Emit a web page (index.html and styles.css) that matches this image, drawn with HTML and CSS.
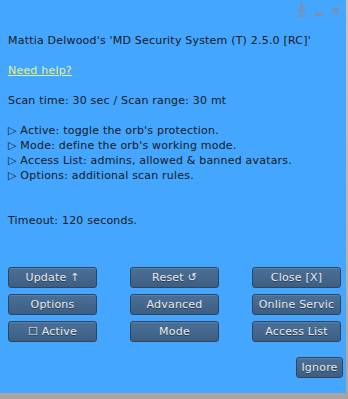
FILE: index.html
```html
<!DOCTYPE html>
<html lang="en">
<head>
    <meta charset="UTF-8">
    <meta name="viewport" content="width=device-width, initial-scale=1.0">
    <title>MD Security System</title>
    <link rel="stylesheet" href="styles.css">
</head>
<body>
    <div class="floater">
        <div class="titlebar">
            <span class="tb-icon">
                <svg width="9" height="14" viewBox="0 0 9 14">
                    <rect x="3" y="0" width="3" height="6" fill="#7593b6"/>
                    <path d="M0 6 H9 L4.5 11 Z" fill="#7593b6"/>
                    <rect x="0" y="12" width="9" height="2" fill="#7593b6"/>
                </svg>
            </span>
            <span class="tb-icon">
                <svg width="9" height="14" viewBox="0 0 9 14">
                    <rect x="0" y="10" width="9" height="3" fill="#7593b6"/>
                </svg>
            </span>
            <span class="tb-icon">
                <svg width="9" height="14" viewBox="0 0 9 14">
                    <path d="M1 4 L8 11 M8 4 L1 11" stroke="#7593b6" stroke-width="2"/>
                </svg>
            </span>
        </div>

        <div class="message">
            <p>Mattia Delwood's 'MD Security System (T) 2.5.0 [RC]'</p>
            <p class="blank"></p>
            <p><a href="#">Need help?</a></p>
            <p class="blank"></p>
            <p>Scan time: 30 sec / Scan range: 30 mt</p>
            <p class="blank"></p>
            <p>&#9655; Active: toggle the orb's protection.</p>
            <p>&#9655; Mode: define the orb's working mode.</p>
            <p>&#9655; Access List: admins, allowed &amp; banned avatars.</p>
            <p>&#9655; Options: additional scan rules.</p>
            <p class="blank"></p>
            <p class="blank"></p>
            <p>Timeout: 120 seconds.</p>
        </div>

        <div class="buttons">
            <button class="btn">Update &#8593;</button>
            <button class="btn">Reset &#8634;</button>
            <button class="btn">Close [X]</button>
            <button class="btn">Options</button>
            <button class="btn">Advanced</button>
            <button class="btn">Online Servic</button>
            <button class="btn">&#9744; Active</button>
            <button class="btn">Mode</button>
            <button class="btn">Access List</button>
        </div>

        <div class="ignore-row">
            <button class="btn small">Ignore</button>
        </div>
    </div>
</body>
</html>
```

FILE: styles.css
```css
* {
    margin: 0;
    padding: 0;
    box-sizing: border-box;
}

body {
    font-family: "DejaVu Sans", sans-serif;
    font-size: 11px;
    background: linear-gradient(to bottom, #c9c4c1, #a9a4a2);
    width: 348px;
    height: 399px;
    overflow: hidden;
}

/* Dialog */
.floater {
    width: 346px;
    height: 393px;
    background: #44a6ff;
    color: #151a20;
    display: flex;
    flex-direction: column;
}

.titlebar {
    height: 22px;
    display: flex;
    justify-content: flex-end;
    align-items: flex-start;
    gap: 8px;
    padding: 3px 6px 0 0;
}

.tb-icon {
    display: flex;
    width: 9px;
    height: 14px;
}

.message {
    padding: 11px 8px 0 8px;
    letter-spacing: 0.2px;
}

.message p {
    height: 15px;
    line-height: 15px;
    white-space: nowrap;
}

.message a {
    color: #e2f27e;
    text-decoration: underline;
}

/* Buttons */
.buttons {
    display: grid;
    grid-template-columns: 89px 89px 89px;
    justify-content: space-between;
    row-gap: 6px;
    padding: 0 5px 0 8px;
    margin-top: 39px;
}

.btn {
    height: 21px;
    font-family: "DejaVu Sans", sans-serif;
    font-size: 11px;
    letter-spacing: 0.2px;
    color: #e8ecf0;
    text-shadow: 0 1px 0 rgba(0, 0, 0, 0.45);
    background: linear-gradient(to bottom, #4b7097, #3d5e83);
    border: 1px solid #2b4563;
    border-radius: 3px;
    box-shadow: inset 0 1px 0 rgba(255, 255, 255, 0.12);
    white-space: nowrap;
    overflow: hidden;
}

.ignore-row {
    display: flex;
    justify-content: flex-end;
    padding: 15px 3px 0 0;
}

.btn.small {
    width: 47px;
}
```
